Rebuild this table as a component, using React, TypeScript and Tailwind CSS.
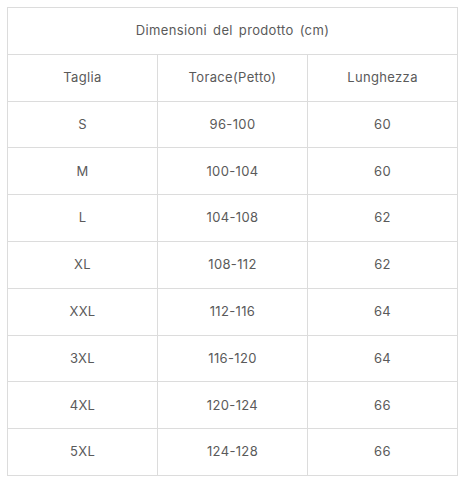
import React from "react";

const rows = [
  ["S", "96-100", "60"],
  ["M", "100-104", "60"],
  ["L", "104-108", "62"],
  ["XL", "108-112", "62"],
  ["XXL", "112-116", "64"],
  ["3XL", "116-120", "64"],
  ["4XL", "120-124", "66"],
  ["5XL", "124-128", "66"],
];

export default function App() {
  const cell = "border border-[#dcdcdc] h-[46.8px] text-center align-middle p-0 font-normal";
  return (
    <div className="w-[466px] h-[480px] bg-white pt-[7px] pl-[7px]" style={{ fontFamily: "Inter, 'Open Sans', sans-serif" }}>
      <table className="border-collapse w-[451px] table-fixed text-[13px] text-[#5a5a5a] tracking-[0.35px]">
        <tbody>
          <tr>
            <td colSpan={3} className={cell + " [word-spacing:2px]"}>Dimensioni del prodotto (cm)</td>
          </tr>
          <tr>
            <td className={cell + " w-[150px]"}>Taglia</td>
            <td className={cell + " w-[150px]"}>Torace(Petto)</td>
            <td className={cell}>Lunghezza</td>
          </tr>
          {rows.map((r) => (
            <tr key={r[0]}>
              {r.map((c, i) => (
                <td key={i} className={cell}>{c}</td>
              ))}
            </tr>
          ))}
        </tbody>
      </table>
    </div>
  );
}
